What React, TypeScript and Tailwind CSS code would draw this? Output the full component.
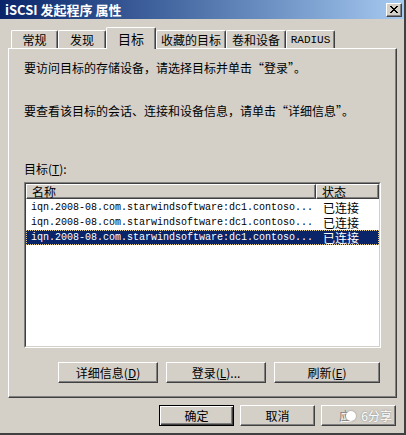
import React from "react";

const CJK = "font-['Noto_Sans_CJK_SC',sans-serif]";
const MONO = "font-['Liberation_Mono','Noto_Sans_CJK_SC',monospace]";

const RAISED =
  "border border-t-white border-l-white border-r-[#404040] border-b-[#404040] shadow-[inset_-1px_-1px_0_#808080]";

/* ---------------- DATA ---------------- */

const TABS = [
  { label: "常规", w: "w-[47px]" },
  { label: "发现", w: "w-[48px]" },
  { label: "目标", w: "w-[50px]", active: true },
  { label: "收藏的目标", w: "w-[70px]" },
  { label: "卷和设备", w: "w-[60px]" },
  { label: "RADIUS", w: "w-[49px]", latin: true },
];

const TARGETS = [
  { name: "iqn.2008-08.com.starwindsoftware:dc1.contoso...", status: "已连接" },
  { name: "iqn.2008-08.com.starwindsoftware:dc1.contoso...", status: "已连接" },
  { name: "iqn.2008-08.com.starwindsoftware:dc1.contoso...", status: "已连接", selected: true },
];

function Key({ k }: { k: string }) {
  return (
    <>
      (<span className="underline underline-offset-[1px]">{k}</span>)
    </>
  );
}

function Btn({
  w,
  children,
  isDefault,
}: {
  w: string;
  children: React.ReactNode;
  isDefault?: boolean;
}) {
  return (
    <button
      className={`${w} h-[21px] flex items-center justify-center bg-[#d4d0c8] text-[12px] leading-[14px] text-black ${CJK} ${
        isDefault
          ? "border border-black shadow-[inset_1px_1px_0_#fff,inset_-1px_-1px_0_#404040,inset_-2px_-2px_0_#808080]"
          : RAISED
      }`}
    >
      {children}
    </button>
  );
}

export default function App() {
  return (
    <div className="w-[406px] h-[435px] bg-[#d4d0c8] flex flex-col border-r-2 border-b-2 border-r-[#404040] border-b-[#404040] overflow-hidden">
      {/* TITLE BAR */}
      <div className="h-[19px] shrink-0 flex items-center justify-between bg-gradient-to-r from-[#0a246a] to-[#a6caf0] pl-[5px] pr-[2px]">
        <span className={`text-white font-bold text-[13px] leading-[15px] ${CJK}`}>
          iSCSI 发起程序 属性
        </span>
        <div className={`w-[16px] h-[14px] bg-[#d4d0c8] flex items-center justify-center ${RAISED}`}>
          <svg width="8" height="7" viewBox="0 0 8 7" shapeRendering="crispEdges">
            <path d="M0 0h2v1H0zM6 0h2v1H6zM1 1h2v1H1zM5 1h2v1H5zM2 2h4v1H2zM3 3h2v1H3zM2 4h4v1H2zM1 5h2v1H1zM5 5h2v1H5zM0 6h2v1H0zM6 6h2v1H6z" fill="#000" />
          </svg>
        </div>
      </div>

      {/* BODY */}
      <div className="flex-1 px-[8px] pt-[8px] pr-[7px]">
        {/* TABS */}
        <div className="flex items-end pl-[3px] h-[22px] relative z-10">
          {TABS.map((t) => (
            <div
              key={t.label}
              className={`${t.w} flex items-center justify-center bg-[#d4d0c8] border-t border-l border-t-white border-l-white border-r border-r-[#404040] shadow-[inset_-1px_0_0_#808080] rounded-t-[2px] leading-[14px] text-black ${
                t.latin ? MONO + " text-[11px]" : CJK + " text-[12px]"
              } ${t.active ? "h-[22px] relative z-10 text-[13px]" : "h-[18px] mb-[1px]"}`}
            >
              {t.label}
            </div>
          ))}
        </div>

        {/* PANEL */}
        <div className={`-mt-px h-[350px] flex flex-col px-[15px] ${RAISED} ${CJK} text-[12px] leading-[14px] text-black`}>
          <p className="mt-[12px]">要访问目标的存储设备，请选择目标并单击“登录”。</p>
          <p className="mt-[29px]">要查看该目标的会话、连接和设备信息，请单击“详细信息”。</p>
          <p className="mt-[44px]">
            目标<Key k="T" />:
          </p>

          {/* LIST */}
          <div className="mt-[6px] h-[166px] bg-white border border-t-[#808080] border-l-[#808080] border-r-white border-b-white">
            <div className="h-full border border-t-[#404040] border-l-[#404040] border-r-[#d4d0c8] border-b-[#d4d0c8]">
              <div className="flex h-[15px] bg-[#d4d0c8]">
                <div className={`w-[290px] pl-[5px] flex items-center ${RAISED}`}>名称</div>
                <div className={`flex-1 pl-[5px] flex items-center ${RAISED}`}>状态</div>
              </div>
              <div className="pt-px">
                {TARGETS.map((r, i) => (
                  <div
                    key={i}
                    className={`flex h-[15px] items-center ${
                      r.selected
                        ? "bg-[#0a246a] text-white outline outline-1 outline-dotted outline-[#e8d08a] -outline-offset-1"
                        : "text-black"
                    }`}
                  >
                    <span className={`w-[290px] shrink-0 overflow-hidden whitespace-nowrap pl-[5px] text-[10px] leading-[15px] ${MONO}`}>
                      {r.name}
                    </span>
                    <span className="pl-[7px]">{r.status}</span>
                  </div>
                ))}
              </div>
            </div>
          </div>

          {/* ACTIONS */}
          <div className="mt-[14px] flex pl-[34px]">
            <Btn w="w-[100px]">
              详细信息<Key k="D" />
            </Btn>
            <div className="w-[8px]" />
            <Btn w="w-[100px]">
              登录<Key k="L" />...
            </Btn>
            <div className="w-[8px]" />
            <Btn w="w-[106px]">
              刷新<Key k="E" />
            </Btn>
          </div>
        </div>

        {/* DIALOG BUTTONS */}
        <div className="mt-[7px] flex justify-end gap-[6px] pr-[1px]">
          <Btn w="w-[75px]" isDefault>
            确定
          </Btn>
          <Btn w="w-[75px]">取消</Btn>
          <div className="relative">
            <Btn w="w-[75px]">
              <span className="w-full pl-[17px] text-left text-[#808080] [text-shadow:1px_1px_0_#fff]">应</span>
            </Btn>
            <div className={`absolute inset-y-0 right-0 flex items-center pr-[4px] gap-[2px] text-[12px] text-white ${CJK} [text-shadow:0_0_2px_#777]`}>
              <span className="w-[10px] h-[10px] rounded-full bg-white shadow-[0_0_2px_#888]" />
              <span className="pl-[3px]">6分享</span>
            </div>
          </div>
        </div>
      </div>
    </div>
  );
}
